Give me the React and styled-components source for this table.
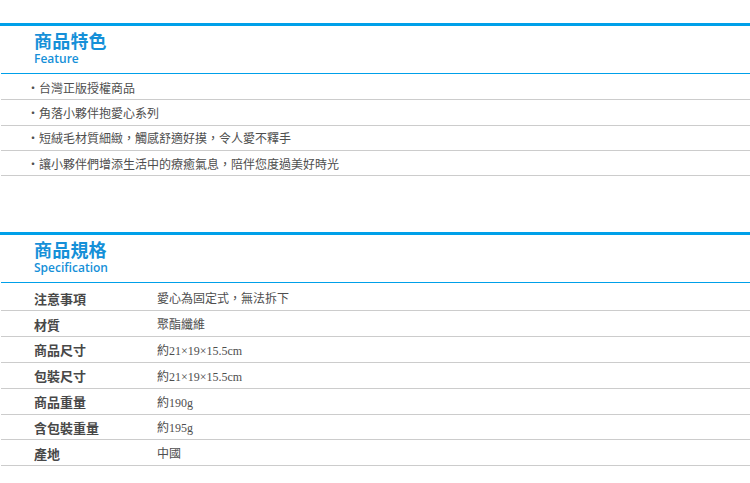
import React from "react";
import styled, { createGlobalStyle } from "styled-components";

const GlobalStyle = createGlobalStyle`
  html, body { margin: 0; padding: 0; background: #ffffff; }
  body { font-family: "Noto Sans CJK TC", "Noto Sans", sans-serif; }
`;

const Page = styled.div`
  padding-top: 23px;
  width: 750px;
`;

const Section = styled.section`
  border-top: 3px solid #00a0e9;
  margin-top: ${(p) => p.$gap || 0}px;
`;

const Header = styled.header`
  box-sizing: border-box;
  height: 48px;
  padding: 5px 0 0 33px;
  border-bottom: 1px solid #00a0e9;
  margin-left: 1px;
`;

const Title = styled.h2`
  margin: 0;
  font-family: "Noto Sans CJK TC", sans-serif;
  font-weight: 700;
  font-size: 18px;
  line-height: 18px;
  color: #1590d8;
  letter-spacing: 0.2px;
`;

const Subtitle = styled.div`
  margin-top: 3px;
  font-family: "Open Sans", "Noto Sans", sans-serif;
  font-weight: 600;
  font-size: 12px;
  line-height: 13px;
  color: #1590d8;
`;

const FeatureList = styled.ul`
  list-style: none;
  margin: 0 0 0 1px;
  padding: 1px 0 0 0;
`;

const FeatureItem = styled.li`
  box-sizing: border-box;
  height: 25.33px;
  border-bottom: 1px solid #cccccc;
  display: flex;
  align-items: center;
  padding-left: 26px;
  font-family: "Noto Sans CJK TC", sans-serif;
  font-size: 12px;
  color: #4e4e4e;
  white-space: nowrap;
`;

const SpecTable = styled.div`
  margin-left: 1px;
  padding-top: 2px;
`;

const SpecRow = styled.div`
  box-sizing: border-box;
  height: 25.85px;
  border-bottom: 1px solid #cccccc;
  display: grid;
  grid-template-columns: 123px 1fr;
  align-items: center;
  padding-left: 33px;
`;

const SpecLabel = styled.div`
  font-family: "Noto Sans CJK TC", sans-serif;
  font-weight: 700;
  font-size: 13px;
  color: #484848;
  padding-top: 1px;
`;

const SpecValue = styled.div`
  font-family: "Liberation Serif", "Noto Sans CJK TC", serif;
  font-size: 12px;
  color: #4e4e4e;
  padding-top: 1px;
  white-space: nowrap;
`;

const features = [
  "台灣正版授權商品",
  "角落小夥伴抱愛心系列",
  "短絨毛材質細緻，觸感舒適好摸，令人愛不釋手",
  "讓小夥伴們增添生活中的療癒氣息，陪伴您度過美好時光",
];

const specs = [
  ["注意事項", "愛心為固定式，無法拆下"],
  ["材質", "聚酯纖維"],
  ["商品尺寸", "約21×19×15.5cm"],
  ["包裝尺寸", "約21×19×15.5cm"],
  ["商品重量", "約190g"],
  ["含包裝重量", "約195g"],
  ["產地", "中國"],
];

export default function App() {
  return (
    <>
      <GlobalStyle />
      <Page>
        <Section>
          <Header>
            <Title>商品特色</Title>
            <Subtitle>Feature</Subtitle>
          </Header>
          <FeatureList>
            {features.map((f) => (
              <FeatureItem key={f}>・{f}</FeatureItem>
            ))}
          </FeatureList>
        </Section>
        <Section $gap={56}>
          <Header>
            <Title>商品規格</Title>
            <Subtitle>Specification</Subtitle>
          </Header>
          <SpecTable>
            {specs.map(([k, v]) => (
              <SpecRow key={k}>
                <SpecLabel>{k}</SpecLabel>
                <SpecValue>{v}</SpecValue>
              </SpecRow>
            ))}
          </SpecTable>
        </Section>
      </Page>
    </>
  );
}
